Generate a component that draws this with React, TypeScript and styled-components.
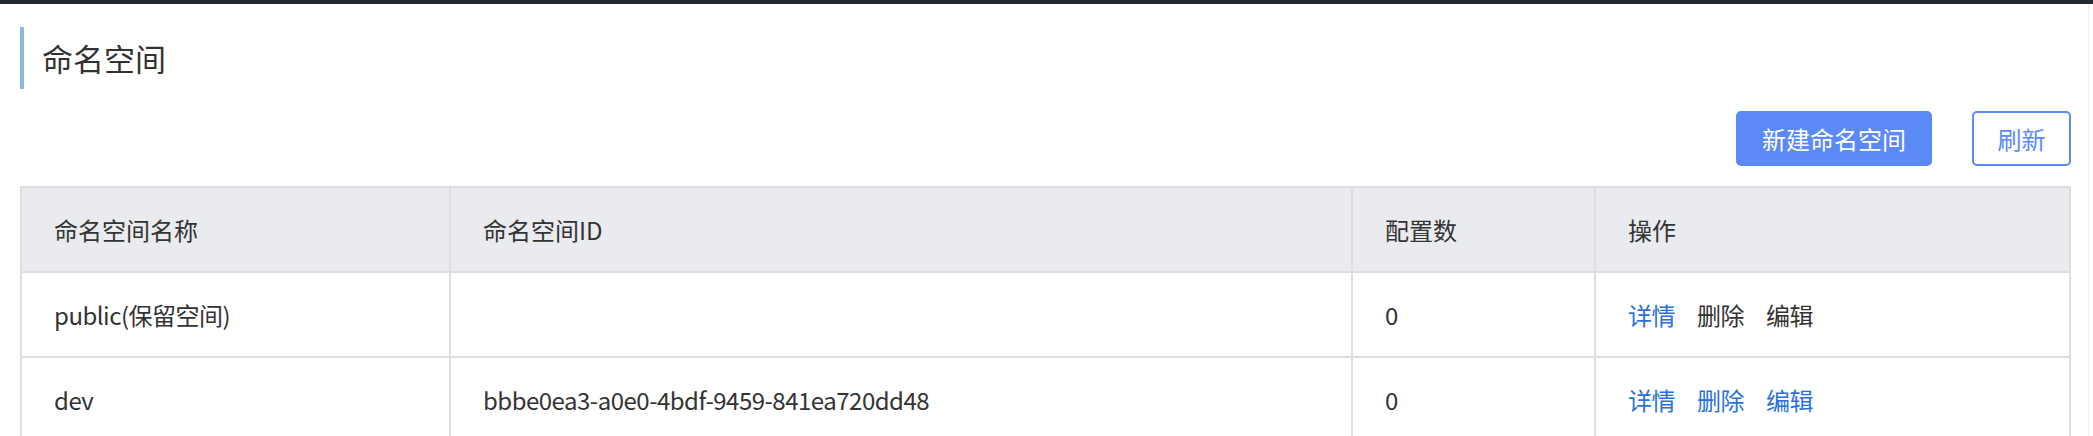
import React from 'react';
import styled, { createGlobalStyle } from 'styled-components';

const GlobalStyle = createGlobalStyle`
  html, body {
    margin: 0;
    padding: 0;
    background: #fff;
  }
  body {
    font-family: "Noto Sans CJK SC", "Liberation Sans", sans-serif;
    color: #333;
  }
`;

// top dark strip
const TopBar = styled.div`
  height: 4px;
  background-color: #24292e;
`;

const Page = styled.div`
  margin-right: 4px;
  border-right: 1px solid #ececec;
  padding: 23px 17px 0 20px;
  min-height: 432px;
  box-sizing: border-box;
`;

const Title = styled.h2`
  margin: 0;
  height: 62px;
  line-height: 62px;
  padding-left: 18px;
  border-left: 4px solid #8cb8e0;
  font-size: 31px;
  font-weight: 400;
  color: #333;
`;

const Toolbar = styled.div`
  display: flex;
  justify-content: flex-end;
  gap: 40px;
  margin-top: 22px;
  margin-bottom: 20px;
`;

const Button = styled.button<{ $primary?: boolean }>`
  height: 55px;
  padding: 0 ${(p) => (p.$primary ? '24px' : '22px')};
  min-width: ${(p) => (p.$primary ? '196px' : '99px')};
  border-radius: 5px;
  border: 2px solid #5b8af7;
  background-color: ${(p) => (p.$primary ? '#5b8af7' : '#fff')};
  color: ${(p) => (p.$primary ? '#fff' : '#5b8af7')};
  font-family: inherit;
  font-size: 24px;
  cursor: pointer;
`;

const Table = styled.table`
  width: 100%;
  border-collapse: collapse;
  table-layout: fixed;
  font-size: 24px;
`;

const Th = styled.th`
  height: 83px;
  padding: 0 32px;
  text-align: left;
  font-weight: 400;
  color: #333;
  background-color: #e9ebef;
  border: 2px solid #dddee2;
`;

const Td = styled.td`
  height: 83px;
  padding: 0 32px;
  color: #333;
  border: 2px solid #dddee2;
  white-space: nowrap;
  letter-spacing: -0.5px;
`;

const Actions = styled.div`
  display: flex;
  gap: 22px;
`;

const ActionLink = styled.a<{ $muted?: boolean }>`
  color: ${(p) => (p.$muted ? '#333' : '#2a72d8')};
  text-decoration: none;
  cursor: pointer;
`;

type Namespace = {
  name: string;
  id: string;
  count: number;
  reserved?: boolean;
};

const namespaces: Namespace[] = [
  { name: 'public(保留空间)', id: '', count: 0, reserved: true },
  { name: 'dev', id: 'bbbe0ea3-a0e0-4bdf-9459-841ea720dd48', count: 0 },
];

const App: React.FC = () => {
  return (
    <>
      <GlobalStyle />
      <TopBar />
      <Page>
        <Title>命名空间</Title>
        <Toolbar>
          <Button $primary>新建命名空间</Button>
          <Button>刷新</Button>
        </Toolbar>
        <Table>
          <colgroup>
            <col style={{ width: 429 }} />
            <col style={{ width: 902 }} />
            <col style={{ width: 243 }} />
            <col />
          </colgroup>
          <thead>
            <tr>
              <Th>命名空间名称</Th>
              <Th>命名空间ID</Th>
              <Th>配置数</Th>
              <Th>操作</Th>
            </tr>
          </thead>
          <tbody>
            {namespaces.map((ns) => (
              <tr key={ns.name}>
                <Td>{ns.name}</Td>
                <Td>{ns.id}</Td>
                <Td>{ns.count}</Td>
                <Td>
                  <Actions>
                    <ActionLink>详情</ActionLink>
                    <ActionLink $muted={ns.reserved}>删除</ActionLink>
                    <ActionLink $muted={ns.reserved}>编辑</ActionLink>
                  </Actions>
                </Td>
              </tr>
            ))}
          </tbody>
        </Table>
      </Page>
    </>
  );
};

export default App;
